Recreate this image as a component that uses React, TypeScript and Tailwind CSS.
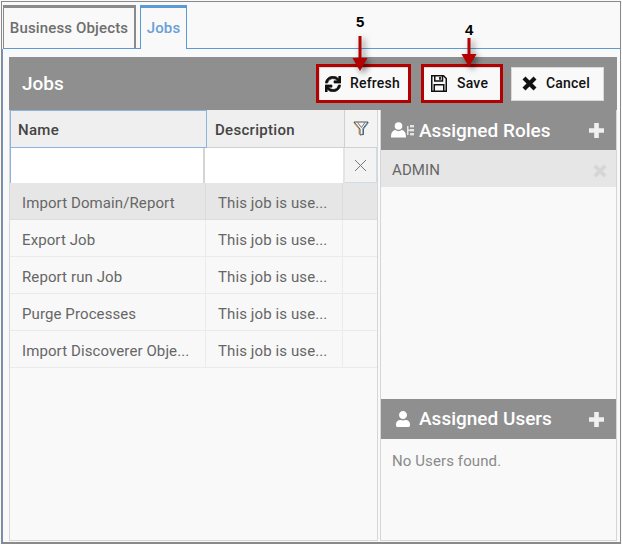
import { FaSync, FaUser } from "react-icons/fa"

const jobs = ["Import Domain/Report", "Export Job", "Report run Job", "Purge Processes", "Import Discoverer Obje..."]

function Arrow({ height }: { height: number }) {
  return (
    <svg width="16" height={height} viewBox={`0 0 16 ${height}`} className="overflow-visible drop-shadow-[3px_3px_3px_rgba(0,0,0,0.5)]">
      <rect x="6.5" y="0" width="3" height={height - 8} fill="#b30000" />
      <polygon points={`0.5,${height - 13} 15.5,${height - 13} 8,${height}`} fill="#b30000" />
    </svg>
  )
}

function Cross({ size, color }: { size: number; color: string }) {
  return (
    <svg width={size} height={size} viewBox="0 0 15 15" stroke={color} strokeWidth="4.2" fill="none">
      <path d="M2 2 L13 13 M13 2 L2 13" />
    </svg>
  )
}

function Plus() {
  return (
    <svg width="15" height="15" viewBox="0 0 15 15" fill="#f0f0f0">
      <path d="M5.2 0 H9.8 V5.2 H15 V9.8 H9.8 V15 H5.2 V9.8 H0 V5.2 H5.2 Z" />
    </svg>
  )
}

function Floppy() {
  return (
    <svg width="16" height="17" viewBox="0 0 16 17" fill="none" stroke="#111" strokeWidth="1.5">
      <path d="M0.75 0.75 H12.5 L15.25 3.5 V16.25 H0.75 Z" />
      <path d="M3.75 1 V6 H11.5 V1" />
      <path d="M3.25 16 V9.75 H12.75 V16" />
      <path d="M9 2 V4.8" strokeWidth="1.8" />
    </svg>
  )
}

function ToolButton({ icon, label, className }: { icon: React.ReactNode; label: string; className: string }) {
  return (
    <button className={`flex h-[34px] items-center border border-[#d9d9d9] bg-[#f9f9f9] text-[14px] font-medium tracking-[0.2px] text-[#111] ${className}`}>
      {icon}
      {label}
    </button>
  )
}

export default function App() {
  return (
    <div className="relative h-[544px] w-[622px] overflow-hidden bg-[#f9f9f9] pl-px pt-px font-['Roboto',sans-serif]">
      <div className="flex h-[543px] w-[620px] flex-col border-x border-t border-b-2 border-[#8a8a8a]">
        {/* Tabs */}
        <div className="ml-px mt-[3px] flex h-[44px] shrink-0 items-stretch border-b border-[#5b9bd5]">
          <div className="flex w-[133px] items-center justify-center border-l border-r-2 border-t-[3px] border-[#8a8a8a] text-[15px] font-medium tracking-[0.15px] text-[#6e6e6e]">
            Business Objects
          </div>
          <div className="mb-[-1px] ml-1 flex w-[47px] items-center justify-center border-x border-t-[3px] border-[#5b9bd5] bg-[#f9f9f9] text-[15px] font-medium tracking-[0.15px] text-[#6a9fd8]">
            Jobs
          </div>
        </div>

        {/* Panel */}
        <div className="flex min-h-0 flex-1 flex-col border-l border-[#6f93c0] pb-px pl-[6px] pr-[2px] pt-2">
          <div className="flex h-[53px] w-[608px] shrink-0 items-center bg-[#8f8f8f] pl-[13px] pr-[13px]">
            <span className="pt-px text-[19px] font-medium text-white">Jobs</span>
            <div className="ml-auto flex items-center">
              <ToolButton icon={<FaSync className="text-[16px]" stroke="#111" strokeWidth={24} />} label="Refresh" className="w-[92px] gap-[9px] pl-[5px]" />
              <div className="w-[12px]" />
              <ToolButton icon={<Floppy />} label="Save" className="w-[78px] gap-[10px] pl-[7px]" />
              <div className="w-[10px]" />
              <ToolButton icon={<Cross size={15} color="#111" />} label="Cancel" className="w-[93px] gap-[9px] pl-[10px]" />
            </div>
          </div>

          <div className="flex min-h-0 w-[608px] flex-1">
            {/* Jobs grid */}
            <div className="flex w-[369px] shrink-0 flex-col border-x border-b border-[#d6d6d6]">
              <div className="flex h-[38px] shrink-0 text-[15px] font-medium tracking-[0.3px] text-[#444]">
                <div className="flex w-[197px] items-center border border-[#8db4dc] bg-[#efefef] pl-[7px] pt-[3px]">Name</div>
                <div className="flex w-[137px] items-center border-b border-[#d0d0d0] bg-[#efefef] pl-2 pt-[3px]">Description</div>
                <div className="flex flex-1 items-center justify-center border-b border-l border-[#d0d0d0] bg-[#f3f3f3]">
                  <svg width="16" height="15" viewBox="0 0 16 15" fill="none">
                    <path d="M0.5 1.5 L6 8 V13" stroke="#d9a441" strokeWidth="1" />
                    <path d="M15.5 1.5 L10.5 8 V14" stroke="#3f8fd0" strokeWidth="1" />
                    <path d="M1 1 H15 L10 7.5 V13.5 L7 14 V8 L1 1 Z" stroke="#444" strokeWidth="0.9" />
                    <path d="M4.5 1.5 L8.5 6.5 L12 1.5" stroke="#666" strokeWidth="0.9" />
                  </svg>
                </div>
              </div>
              <div className="flex h-[35px] shrink-0">
                <div className="w-[195px] border-l border-r-2 border-[#d4d4d4] border-l-[#8db4dc] bg-white" />
                <div className="w-[140px] border-r-2 border-[#e4e4e4] bg-white" />
                <div className="flex flex-1 items-center justify-center border-b border-r border-[#cfdcea] bg-[#f3f3f3]">
                  <svg width="13" height="13" viewBox="0 0 13 13" stroke="#777" strokeWidth="1" fill="none">
                    <path d="M1 1 L12 12 M12 1 L1 12" />
                  </svg>
                </div>
              </div>
              {jobs.map((job, i) => (
                <div key={job} className={`flex h-[37px] shrink-0 border-b text-[15px] tracking-[0.1px] text-[#666] ${i === 0 ? "border-[#dcdcdc] bg-[#e6e6e6]" : "border-[#ebebeb] bg-[#f8f8f8]"}`}>
                  <div className={`flex w-[196px] items-center border-r pl-3 pt-1 ${i === 0 ? "border-[#dcdcdc]" : "border-[#ebebeb]"}`}>{job}</div>
                  <div className={`flex w-[137px] items-center border-r pl-3 pt-1 ${i === 0 ? "border-[#dcdcdc]" : "border-[#ebebeb]"}`}>This job is use...</div>
                  <div className="flex-1" />
                </div>
              ))}
            </div>

            {/* Roles and users */}
            <div className="ml-[2px] flex w-[237px] shrink-0 flex-col border-x border-b border-[#d6d6d6]">
              <div className="flex h-10 shrink-0 items-center bg-[#8f8f8f] pr-[12px] text-white">
                <svg width="24" height="16" viewBox="0 0 24 16" fill="#fff" className="ml-[10px]">
                  <circle cx="7.5" cy="4" r="3.8" />
                  <path d="M0 15.5 C0 10 2 8.5 4.2 8 C6.2 9.5 8.8 9.5 10.8 8 C13 8.5 15 10 15 15.5 Z" />
                  <g fill="#e4e4e4">
                    <rect x="16" y="4" width="1.5" height="9" />
                    <rect x="16" y="7.5" width="3" height="1.5" />
                    <rect x="19" y="3" width="4" height="2.4" />
                    <rect x="19" y="7" width="4" height="2.4" />
                    <rect x="19" y="11" width="4" height="2.4" />
                  </g>
                </svg>
                <span className="ml-[4px] pt-[2px] text-[19px] font-medium">Assigned Roles</span>
                <span className="ml-auto"><Plus /></span>
              </div>
              <div className="flex h-[37px] shrink-0 items-center justify-between bg-[#e6e6e6] pl-[11px] pr-[9px] pt-1 text-[15px] tracking-[0.1px] text-[#666]">
                ADMIN
                <Cross size={14} color="#d6d6d6" />
              </div>
              <div className="h-[212px] shrink-0 bg-[#f9f9f9]" />
              <div className="flex h-10 shrink-0 items-center bg-[#8f8f8f] pr-[12px] text-white">
                <FaUser className="ml-[14px] text-[16px]" />
                <span className="ml-[8px] pt-px text-[19px] font-medium">Assigned Users</span>
                <span className="ml-auto"><Plus /></span>
              </div>
              <div className="pl-[11px] pt-[11px] text-[15px] tracking-[0.1px] text-[#8a8a8a]">No Users found.</div>
            </div>
          </div>
        </div>
      </div>

      {/* Annotations laid over the toolbar */}
      <div className="absolute left-[316px] top-[64px] h-[39px] w-[95px] border-[3px] border-[#b30000]" />
      <div className="absolute left-[421px] top-[64px] h-[39px] w-[82px] border-[3px] border-[#b30000]" />
      <span className="absolute left-[356px] top-[14px] font-['Liberation_Sans',sans-serif] text-[15px] font-bold leading-4 text-black">5</span>
      <span className="absolute left-[465px] top-[22px] font-['Liberation_Sans',sans-serif] text-[15px] font-bold leading-4 text-black">4</span>
      <div className="absolute left-[352px] top-[36px]"><Arrow height={35} /></div>
      <div className="absolute left-[461px] top-[38px]"><Arrow height={29} /></div>
    </div>
  )
}
